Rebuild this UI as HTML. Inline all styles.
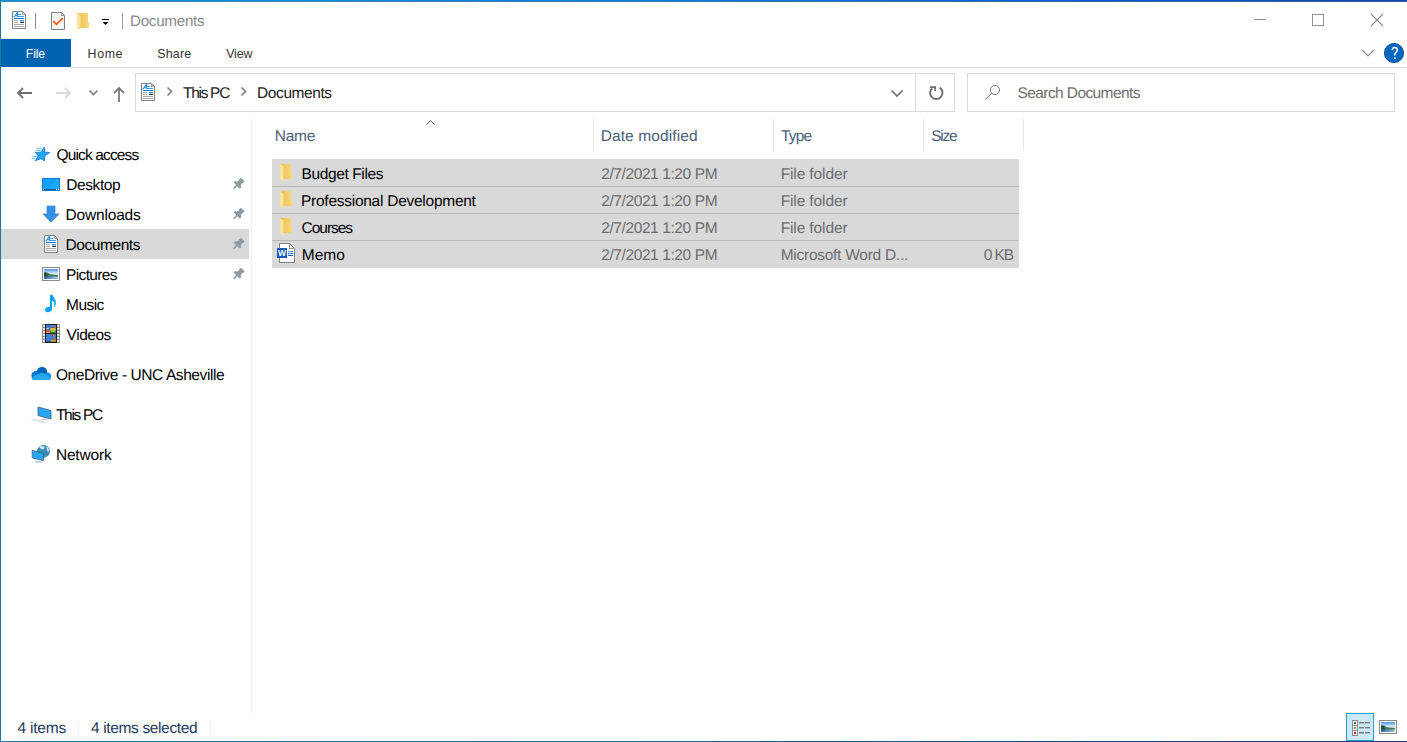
<!DOCTYPE html>
<html><head><meta charset="utf-8">
<style>
html,body{margin:0;padding:0;}
body{width:1407px;height:742px;overflow:hidden;position:relative;background:#fff;font-family:"Liberation Sans",sans-serif;}
.a{position:absolute;}
.t{position:absolute;white-space:pre;line-height:20px;}
svg{position:absolute;overflow:visible;}
</style></head><body>

<div class="a" style="left:0;top:0;width:1407px;height:1px;background:linear-gradient(to right,#0a8ed8,#0a80dc 45%,#0a45b8)"></div>
<div class="a" style="left:0;top:1px;width:1407px;height:1px;background:linear-gradient(to right,#3a8fc0,#3a7ab8 45%,#3a5a98)"></div>
<div class="a" style="left:0;top:0;width:1px;height:742px;background:#1a7aa0"></div>
<div class="a" style="left:0;top:741px;width:1407px;height:1px;background:linear-gradient(to right,#1a7aa0,#17699a 45%,#1f3f7a)"></div>
<div class="a" style="left:1px;top:39px;width:70px;height:28px;background:#0063b1"></div>
<div class="a" style="left:71px;top:67px;width:1336px;height:1px;background:#dadbdc"></div>
<div class="a" style="left:135px;top:73px;width:818px;height:37px;border:1px solid #d9d9d9"></div>
<div class="a" style="left:915px;top:74px;width:1px;height:37px;background:#d9d9d9"></div>
<div class="a" style="left:967px;top:73px;width:426px;height:37px;border:1px solid #d9d9d9"></div>
<div class="a" style="left:1px;top:229px;width:248px;height:30px;background:#d9d9d9"></div>
<div class="a" style="left:251px;top:119px;width:1px;height:594px;background:#f3f3f3"></div>
<div class="a" style="left:593px;top:119px;width:1px;height:32px;background:#e5e5e5"></div>
<div class="a" style="left:773px;top:119px;width:1px;height:32px;background:#e5e5e5"></div>
<div class="a" style="left:923px;top:119px;width:1px;height:32px;background:#e5e5e5"></div>
<div class="a" style="left:1023px;top:119px;width:1px;height:32px;background:#e5e5e5"></div>
<div class="a" style="left:272px;top:159px;width:747px;height:109px;background:#d9d9d9"></div>
<div class="a" style="left:272px;top:186px;width:747px;height:1px;background:#b9b9b9"></div>
<div class="a" style="left:272px;top:213px;width:747px;height:1px;background:#b9b9b9"></div>
<div class="a" style="left:272px;top:240px;width:747px;height:1px;background:#b9b9b9"></div>
<div class="a" style="left:78px;top:721px;width:1px;height:13px;background:#f0f0f0"></div>
<div class="a" style="left:210px;top:721px;width:1px;height:13px;background:#f0f0f0"></div>
<div class="t" style="left:130.00px;top:12px;font-size:15.2px;color:#8a8a8a;letter-spacing:-0.275px;text-rendering:geometricPrecision">Documents</div>
<div class="t" style="left:25.80px;top:44px;font-size:12.4px;color:#fff;letter-spacing:-0.200px">File</div>
<div class="t" style="left:87.60px;top:44px;font-size:12.4px;color:#333;letter-spacing:0.600px">Home</div>
<div class="t" style="left:157.30px;top:44px;font-size:12.4px;color:#333;letter-spacing:0.200px">Share</div>
<div class="t" style="left:226.20px;top:44px;font-size:12.4px;color:#333;letter-spacing:-0.133px">View</div>
<div class="t" style="left:183.00px;top:84px;font-size:15.5px;color:#1a1a1a;letter-spacing:-1.300px;text-rendering:geometricPrecision">This PC</div>
<div class="t" style="left:257.10px;top:84px;font-size:15.5px;color:#1a1a1a;letter-spacing:-0.425px;text-rendering:geometricPrecision">Documents</div>
<div class="t" style="left:1017.60px;top:84px;font-size:15.5px;color:#6d6d6d;letter-spacing:-0.600px;text-rendering:geometricPrecision">Search Documents</div>
<div class="t" style="left:56.50px;top:146px;font-size:15.5px;color:#000;letter-spacing:-0.855px;text-rendering:geometricPrecision">Quick access</div>
<div class="t" style="left:66.30px;top:176px;font-size:15.5px;color:#000;letter-spacing:-0.433px;text-rendering:geometricPrecision">Desktop</div>
<div class="t" style="left:65.50px;top:206px;font-size:15.5px;color:#000;letter-spacing:-0.175px;text-rendering:geometricPrecision">Downloads</div>
<div class="t" style="left:65.50px;top:236px;font-size:15.5px;color:#000;letter-spacing:-0.425px;text-rendering:geometricPrecision">Documents</div>
<div class="t" style="left:66.10px;top:266px;font-size:15.5px;color:#000;letter-spacing:-0.657px;text-rendering:geometricPrecision">Pictures</div>
<div class="t" style="left:66.10px;top:296px;font-size:15.5px;color:#000;letter-spacing:-0.550px;text-rendering:geometricPrecision">Music</div>
<div class="t" style="left:66.60px;top:326px;font-size:15.5px;color:#000;letter-spacing:-0.480px;text-rendering:geometricPrecision">Videos</div>
<div class="t" style="left:55.90px;top:366px;font-size:15.5px;color:#000;letter-spacing:-0.417px;text-rendering:geometricPrecision">OneDrive - UNC Asheville</div>
<div class="t" style="left:55.90px;top:406px;font-size:15.5px;color:#000;letter-spacing:-1.300px;text-rendering:geometricPrecision">This PC</div>
<div class="t" style="left:55.90px;top:446px;font-size:15.5px;color:#000;letter-spacing:-0.167px;text-rendering:geometricPrecision">Network</div>
<div class="t" style="left:274.80px;top:127px;font-size:15.5px;color:#4c607a;letter-spacing:-0.267px;text-rendering:geometricPrecision">Name</div>
<div class="t" style="left:600.70px;top:127px;font-size:15.5px;color:#4c607a;letter-spacing:0.100px;text-rendering:geometricPrecision">Date modified</div>
<div class="t" style="left:781.10px;top:127px;font-size:15.5px;color:#4c607a;letter-spacing:-0.867px;text-rendering:geometricPrecision">Type</div>
<div class="t" style="left:931.20px;top:127px;font-size:15.5px;color:#4c607a;letter-spacing:-1.200px;text-rendering:geometricPrecision">Size</div>
<div class="t" style="left:301.50px;top:165px;font-size:15.5px;color:#000;letter-spacing:-0.382px;text-rendering:geometricPrecision">Budget Files</div>
<div class="t" style="left:601.20px;top:165px;font-size:15.5px;color:#6d6d6d;letter-spacing:-0.400px;text-rendering:geometricPrecision">2/7/2021 1:20 PM</div>
<div class="t" style="left:780.70px;top:165px;font-size:15.5px;color:#6d6d6d;letter-spacing:-0.120px;text-rendering:geometricPrecision">File folder</div>
<div class="t" style="left:301.00px;top:192px;font-size:15.5px;color:#000;letter-spacing:-0.261px;text-rendering:geometricPrecision">Professional Development</div>
<div class="t" style="left:601.20px;top:192px;font-size:15.5px;color:#6d6d6d;letter-spacing:-0.400px;text-rendering:geometricPrecision">2/7/2021 1:20 PM</div>
<div class="t" style="left:780.70px;top:192px;font-size:15.5px;color:#6d6d6d;letter-spacing:-0.120px;text-rendering:geometricPrecision">File folder</div>
<div class="t" style="left:301.60px;top:219px;font-size:15.5px;color:#000;letter-spacing:-1.033px;text-rendering:geometricPrecision">Courses</div>
<div class="t" style="left:601.20px;top:219px;font-size:15.5px;color:#6d6d6d;letter-spacing:-0.400px;text-rendering:geometricPrecision">2/7/2021 1:20 PM</div>
<div class="t" style="left:780.70px;top:219px;font-size:15.5px;color:#6d6d6d;letter-spacing:-0.120px;text-rendering:geometricPrecision">File folder</div>
<div class="t" style="left:301.70px;top:246px;font-size:15.5px;color:#000;letter-spacing:0.067px;text-rendering:geometricPrecision">Memo</div>
<div class="t" style="left:601.20px;top:246px;font-size:15.5px;color:#6d6d6d;letter-spacing:-0.400px;text-rendering:geometricPrecision">2/7/2021 1:20 PM</div>
<div class="t" style="left:780.70px;top:246px;font-size:15.5px;color:#6d6d6d;letter-spacing:-0.267px;text-rendering:geometricPrecision">Microsoft Word D...</div>
<div class="t" style="left:983.70px;top:246px;font-size:15.5px;color:#6d6d6d;letter-spacing:-1.067px;text-rendering:geometricPrecision">0 KB</div>
<div class="t" style="left:17.40px;top:719px;font-size:15.5px;color:#1e395b;letter-spacing:-0.200px;text-rendering:geometricPrecision">4 items</div>
<div class="t" style="left:91.00px;top:719px;font-size:15.5px;color:#1e395b;letter-spacing:-0.360px;text-rendering:geometricPrecision">4 items selected</div>
<svg width="1407" height="742" style="left:0;top:0">
<defs>
 <g id="doc">
  <path d="M0.5,0.5 H10.5 L13.5,3.5 V17.5 H0.5 Z" fill="#fff" stroke="#7f7f7f"/>
  <path d="M10.5,0.5 V3.5 H13.5" fill="none" stroke="#9a9a9a" shape-rendering="crispEdges"/>
  <path d="M1.6,6.3 Q3.6,4.6 5,1.8 L5.6,1.8 L5.2,6.2" fill="none" stroke="#1a8be0" stroke-width="1.1"/><path d="M3,4.6 H5.4" stroke="#1a8be0" stroke-width="0.8"/>
  <rect x="6" y="3" width="3" height="1" fill="#3aa0e8"/>
  <rect x="6" y="5" width="6" height="1" fill="#3aa0e8"/>
  <rect x="2" y="7" width="10" height="1" fill="#0a7ad6"/>
  <rect x="2" y="9" width="4" height="1" fill="#a8a8a8"/>
  <rect x="2" y="11" width="4" height="1" fill="#a8a8a8"/>
  <rect x="8" y="9" width="4" height="1" fill="#4a86e0"/>
  <rect x="8" y="10" width="4" height="1" fill="#a9c9ea"/>
  <rect x="8" y="11" width="4" height="1" fill="#1f4a2a"/>
  <rect x="2" y="13" width="10" height="1" fill="#a8a8a8"/>
  <rect x="2" y="15" width="10" height="1" fill="#a8a8a8"/>
 </g>
 <linearGradient id="fback" x1="0" y1="0" x2="1" y2="0"><stop offset="0" stop-color="#e9bf55"/><stop offset="1" stop-color="#f8d878"/></linearGradient>
 <g id="folder">
  <path d="M0,0 H11 V9 H12 V15 H2 Z" fill="url(#fback)"/>
  <path d="M0,0 L3.5,2.8 V16.8 L2.6,17 L0,15.5 Z" fill="#fbe39c"/>
 </g>
 <g id="pin">
  <path transform="translate(9.8,1.5) rotate(45)" fill="#8e9ba4" d="M-2.6,0 H2.6 V3 H2 L3.1,6.2 H4.4 V8.6 H0.8 V13 H-0.8 V8.6 H-4.4 V6.2 H-3.1 L-2,3 H-2.6 Z"/>
 </g>
 <linearGradient id="sky" x1="0" y1="0" x2="0" y2="1"><stop offset="0" stop-color="#4f90ea"/><stop offset="0.45" stop-color="#d8ecf9"/><stop offset="1" stop-color="#eef7fc"/></linearGradient>
 <linearGradient id="wat" x1="0" y1="0" x2="1" y2="0"><stop offset="0" stop-color="#2f5fa6"/><stop offset="1" stop-color="#a9c8e4"/></linearGradient>
 <g id="pic">
  <rect x="0.5" y="0.5" width="17" height="13" fill="#fff" stroke="#8a8a8a" shape-rendering="crispEdges"/>
  <rect x="2" y="2" width="14" height="10" fill="url(#sky)"/>
  <path d="M2,5.5 Q5,4.8 8,7.2 L16,8 V10 H2 Z" fill="#3f7c58"/>
  <path d="M2,5.5 Q3.5,5.3 5,6 L6,10 H2 Z" fill="#23503a"/>
  <rect x="2" y="9.5" width="14" height="2.5" fill="url(#wat)"/>
 </g>
</defs>

<!-- title bar icons -->
<use href="#doc" x="12" y="11"/>
<rect x="35" y="13" width="1" height="16" fill="#8c8c8c"/>
<path d="M51.5,12.5 H61.5 L64.5,15.5 V29.5 H51.5 Z" fill="#f3f4f6" stroke="#7f7f7f"/>
<path d="M61.5,12.5 V15.5 H64.5" fill="none" stroke="#9a9a9a" shape-rendering="crispEdges"/>
<path d="M53.3,21.2 L56.5,24.4 L62.7,18.2" fill="none" stroke="#f2590f" stroke-width="1.7"/>
<use href="#folder" x="77" y="13"/>
<rect x="102" y="19" width="7" height="1" fill="#000"/>
<path d="M102.5,22 H108.5 L105.5,25 Z" fill="#000"/>
<rect x="122" y="13" width="1" height="16" fill="#9a9a9a"/>

<!-- window controls -->
<rect x="1254" y="19" width="12" height="1" fill="#939393"/>
<rect x="1312.5" y="14.5" width="11" height="11" fill="none" stroke="#939393" shape-rendering="crispEdges"/>
<path d="M1371,14 L1383,26 M1383,14 L1371,26" stroke="#8a8a8a" stroke-width="1.1"/>

<!-- ribbon right -->
<path d="M1362,50 L1368,56 L1374,50" fill="none" stroke="#838383" stroke-width="1.1"/>
<circle cx="1394" cy="53" r="9.6" fill="#0067c0" stroke="#004a8f" stroke-width="0.9"/>
<path d="M1392.3,50.2 Q1392.3,47.6 1394.8,47.6 Q1397.3,47.6 1397.3,50 Q1397.3,51.6 1395.7,52.6 Q1394.8,53.3 1394.8,54.6 V55.6" fill="none" stroke="#fff" stroke-width="1.5"/><rect x="1394" y="57.3" width="1.7" height="1.7" fill="#fff"/>

<!-- nav buttons -->
<path d="M32,93 H18 M23,88 L18,93 L23,98" fill="none" stroke="#707070" stroke-width="1.8"/>
<path d="M56,93 H70 M65,88 L70,93 L65,98" fill="none" stroke="#dadada" stroke-width="1.8"/>
<path d="M89.5,90.5 L93.5,94.5 L97.5,90.5" fill="none" stroke="#7a7a7a" stroke-width="1.6"/>
<path d="M119,102 V88 M114,93 L119,88 L124,93" fill="none" stroke="#7a7a7a" stroke-width="1.8"/>

<!-- address -->
<use href="#doc" x="141" y="83"/>
<path d="M167.5,87.5 L171.5,91.5 L167.5,95.5" fill="none" stroke="#808080" stroke-width="1.7"/>
<path d="M241.5,87.5 L245.5,91.5 L241.5,95.5" fill="none" stroke="#808080" stroke-width="1.7"/>
<path d="M891.5,90.5 L897,96 L902.5,90.5" fill="none" stroke="#707070" stroke-width="1.7"/>
<path d="M939.6,87.6 A6.2,6.2 0 1 1 932.2,88.2" fill="none" stroke="#707070" stroke-width="2"/>
<path d="M930,87.2 H935.2 V91" fill="none" stroke="#707070" stroke-width="1.7"/>
<circle cx="995" cy="90" r="4.6" fill="none" stroke="#7a7a7a" stroke-width="1"/>
<path d="M991.6,93.4 L985.5,99.5" stroke="#7a7a7a" stroke-width="1"/>

<!-- nav pane icons -->
<path d="M36.7,148.3 H41.6 M35.9,150.4 H40.4 M33,156.5 H36.5 M32.2,158.4 H34.9" stroke="#5fb4f0" stroke-width="0.9" stroke-linecap="round"/>
<path d="M44.3,147.1 L44.8,152.1 L49.9,152.5 L45,155.6 L44.4,160.8 L40.8,158.7 L35.3,160.8 L38.1,155.9 L35.3,152.4 L41,152.2 Z" fill="#22a4f5" stroke="#1377d0" stroke-width="0.8" stroke-linejoin="round"/>
<rect x="42" y="178" width="18" height="13" fill="#1276cc"/>
<rect x="43" y="179" width="16" height="10" fill="#12a0f8"/>
<path d="M49,189 L57,179 H59 V189 Z" fill="#30b0ff" opacity="0.5"/>
<rect x="43" y="189" width="16" height="1" fill="#0a5a9a"/>
<rect x="43" y="189" width="1" height="1" fill="#fff"/><rect x="56" y="189" width="1" height="1" fill="#fff"/><rect x="58" y="189" width="1" height="1" fill="#fff"/>
<path d="M47,206 H55 V214 H59 L51,222.3 L43,214 H47 Z" fill="#3591e3" stroke="#2378cc" stroke-width="0.6"/>
<use href="#doc" x="44" y="235"/>
<use href="#pic" x="42" y="267"/>
<rect x="50" y="294.8" width="2" height="15" fill="#0aa0f6"/>
<path d="M51.5,294.8 H52.2 L55.6,300.2 Q56.5,303.5 54.8,306.8 L53.9,306.3 Q54.7,303.8 54,302.2 Q53.2,300.8 51.5,300.4 Z" fill="#0aa0f6"/>
<ellipse cx="48.5" cy="309.5" rx="3.5" ry="2.6" transform="rotate(-15 48.5 309.5)" fill="#0aa0f6"/>
<!-- videos -->
<rect x="42" y="324" width="18" height="19" fill="#8a8a8a"/>
<rect x="45" y="324" width="12" height="19" fill="#202020"/>
<rect x="46" y="325" width="10" height="8" fill="#3a7ee0"/>
<rect x="46" y="334" width="10" height="7.5" fill="#3a7ee0"/>
<path d="M46,330 L48,329.5 L50,331 V333 H46 Z" fill="#e0503a"/>
<rect x="46" y="332" width="4" height="1" fill="#f0a030"/>
<rect x="46.5" y="328" width="2" height="1" fill="#e8e070"/>
<rect x="50" y="331" width="6" height="2" fill="#20a040"/>
<circle cx="53" cy="329.2" r="2.6" fill="#d8c020"/>
<path d="M50.6,328 Q53,325.8 55.4,328 Z" fill="#b02020"/>
<circle cx="53" cy="335.5" r="1.5" fill="#e07020"/><rect x="52" y="335" width="1" height="1.5" fill="#2040c0"/>
<path d="M50.5,341.5 Q51.5,338.5 53.5,338.5 Q55.5,338.5 56,341.5 Z" fill="#d8b020"/>
<path d="M51,339.5 Q53,338 55.5,339.5 Z" fill="#a02020"/>
<g fill="#fff"><rect x="43" y="325" width="1.8" height="1.8"/><rect x="43" y="328" width="1.8" height="1.8"/><rect x="43" y="331" width="1.8" height="1.8"/><rect x="43" y="334" width="1.8" height="1.8"/><rect x="43" y="337" width="1.8" height="1.8"/><rect x="43" y="340" width="1.8" height="1.8"/>
<rect x="57.3" y="325" width="1.8" height="1.8"/><rect x="57.3" y="328" width="1.8" height="1.8"/><rect x="57.3" y="331" width="1.8" height="1.8"/><rect x="57.3" y="334" width="1.8" height="1.8"/><rect x="57.3" y="337" width="1.8" height="1.8"/><rect x="57.3" y="340" width="1.8" height="1.8"/></g>
<!-- onedrive -->
<circle cx="42" cy="372" r="5.2" fill="#0364b8"/>
<circle cx="36" cy="375.5" r="4.6" fill="#0078d4"/>
<circle cx="47.5" cy="376" r="3.6" fill="#1490df"/>
<path d="M32,377 L42,372.5 L51,377.5 V378 Q51,380 49,380 H34 Q31.5,380 31.5,377.5 Z" fill="#28a8ea"/>
<!-- this pc -->
<path d="M38,407 L51,410.5 V419 L38,415.5 Z" fill="#2aa7f4" stroke="#3a4a58" stroke-width="0.7"/>
<path d="M42,418.5 H48 L49,420 H41 Z" fill="#c9cfd4"/>
<path d="M34,418.5 L44,421 L46.5,424 L36,421.5 L31,420 Z" fill="#dfe4e8"/>
<!-- network -->
<circle cx="43.5" cy="451.3" r="6.4" fill="#3c8bb8"/>
<path d="M39,447 Q42,445 45,447.5 L43,449.5 Q40,449 39,447 Z M46,446 Q49,448 49.5,451 L47.5,451.5 Z" fill="#cfe6f2"/>
<path d="M32.2,450.2 L43.6,453.5 V460.7 L32.2,457.9 Z" fill="#2aa7f4" stroke="#3a4a58" stroke-width="0.6"/>
<path d="M35,461 H41 L42,463 H35 Z" fill="#c9cfd4"/>

<use href="#pin" x="233" y="178"/>
<use href="#pin" x="233" y="208"/>
<use href="#pin" x="233" y="238"/>
<use href="#pin" x="233" y="268"/>

<!-- sort arrow -->
<path d="M426.5,124.5 L430.5,120.5 L434.5,124.5" fill="none" stroke="#505050" stroke-width="1"/>

<!-- file icons -->
<use href="#folder" x="280" y="164"/>
<use href="#folder" x="280" y="191"/>
<use href="#folder" x="280" y="218"/>
<path d="M279.5,243.5 H289.5 L294.5,248.5 V262.5 H279.5 Z" fill="#fff" stroke="#7f7f7f"/>
<path d="M289.5,243.5 V248.5 H294.5" fill="none" stroke="#9a9a9a" shape-rendering="crispEdges"/>
<rect x="277" y="248" width="10" height="10" fill="#185abd"/>
<text x="282" y="256.3" font-family="Liberation Sans" font-weight="bold" font-size="8.5" fill="#fff" text-anchor="middle">W</text>
<rect x="288" y="251" width="5" height="1" fill="#41a5ee"/><rect x="288" y="253" width="5" height="1" fill="#2b7cd3"/><rect x="288" y="255" width="5" height="1" fill="#185abd"/>

<!-- status view buttons -->
<rect x="1346.5" y="713.5" width="27" height="27" fill="#cce8f6" stroke="#26a0da" shape-rendering="crispEdges"/>
<rect x="1352.5" y="720.5" width="5" height="15" fill="#fff" stroke="#8a8a8a" shape-rendering="crispEdges"/>
<rect x="1352" y="725" width="6" height="1" fill="#8a8a8a"/><rect x="1352" y="730" width="6" height="1" fill="#8a8a8a"/>
<rect x="1354" y="722" width="2" height="2" fill="#3a6a8a"/><rect x="1354" y="727" width="2" height="2" fill="#6a9a3a"/><rect x="1354" y="732" width="2" height="2" fill="#c02020"/>
<g fill="#7a7a7a"><rect x="1359" y="722" width="5" height="1.4"/><rect x="1365" y="722" width="5" height="1.4"/><rect x="1359" y="727" width="5" height="1.4"/><rect x="1365" y="727" width="5" height="1.4"/><rect x="1359" y="732" width="5" height="1.4"/><rect x="1365" y="732" width="5" height="1.4"/></g>
<use href="#pic" x="1379" y="720"/>
</svg>
</body></html>
